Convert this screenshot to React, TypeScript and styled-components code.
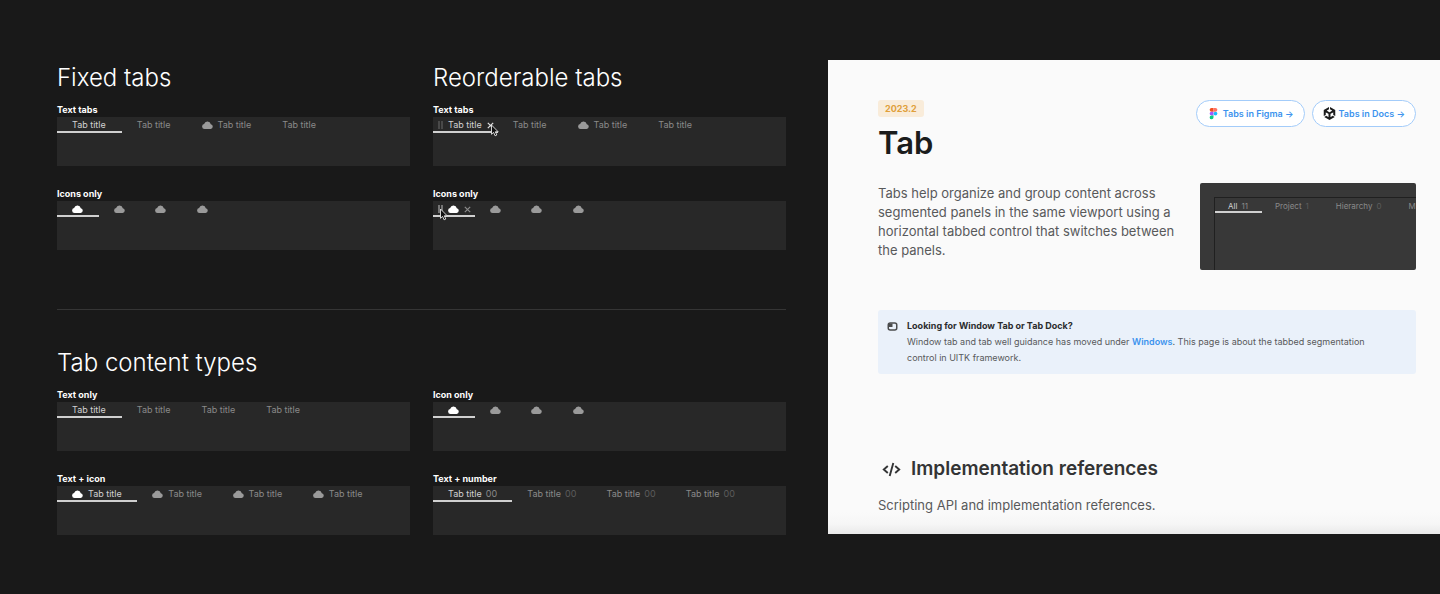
import React from "react";
import styled, { createGlobalStyle, css } from "styled-components";
import { SiUnity } from "react-icons/si";

const GlobalStyle = createGlobalStyle`
  *, *::before, *::after { box-sizing: border-box; }
  body {
    margin: 0;
    background: #191919;
    font-family: Inter, "Liberation Sans", sans-serif;
    -webkit-font-smoothing: antialiased;
  }
  h1, h2, h3, p { margin: 0; }
  button { font: inherit; }
`;

const Page = styled.div`
  display: grid;
  grid-template-columns: minmax(0, 729fr) minmax(0, 612fr);
  column-gap: 42px;
  align-items: start;
  padding: 60px 0 59px 57px;
`;

/* ---------- Specimens ---------- */

const Columns = styled.div`
  display: grid;
  grid-template-columns: repeat(2, minmax(0, 1fr));
  column-gap: 23px;
`;

const Group = styled.section`
  min-width: 0;
`;

const GroupTitle = styled.h2`
  margin-bottom: 8px;
  font-size: 24px;
  font-weight: 300;
  line-height: 35px;
  color: #fff;
  white-space: nowrap;
`;

const Specimen = styled.div`
  & + & { margin-top: 21px; }
`;

const SpecimenLabel = styled.h3`
  font-size: 9px;
  font-weight: 700;
  line-height: 14px;
  color: #fff;
`;

const Panel = styled.div`
  height: 49px;
  background: #282828;
`;

const Divider = styled.hr`
  height: 1px;
  margin: 59px 0 35px;
  border: 0;
  background: #353535;
`;

const TabList = styled.div<{ $width: number }>`
  display: flex;
  width: ${(p) => p.$width}px;
`;

const TabButton = styled.button<{ $active?: boolean; $even?: boolean }>`
  position: relative;
  display: flex;
  align-items: center;
  gap: 5px;
  height: 16px;
  padding: 0 0 0 15px;
  border: 0;
  border-bottom: 2px solid ${(p) => (p.$active ? "#d0d0d0" : "transparent")};
  background: none;
  color: ${(p) => (p.$active ? "#d2d2d2" : "#8a8a8a")};
  font-size: 9px;
  line-height: 14px;
  white-space: nowrap;
  ${(p) => (p.$even ? css`flex: 1 1 0;` : css`flex: none; padding-right: 16px;`)}
`;

const TabText = styled.span`
  display: flex;
  gap: 4px;
  padding-top: 2px;
`;

const Count = styled.span<{ $active?: boolean }>`
  color: ${(p) => (p.$active ? "#8a8a8a" : "#5c5c5c")};
`;

const CloudSvg = styled.svg<{ $active?: boolean }>`
  flex: none;
  width: 11px;
  height: 8px;
  margin-top: 2px;
  fill: ${(p) => (p.$active ? "#fff" : "#9a9a9a")};
`;

const Handle = styled.svg`
  position: absolute;
  left: 5px;
  top: 4px;
  width: 5px;
  height: 8px;
`;

const Close = styled.svg`
  position: absolute;
  right: 4px;
  top: 5px;
  width: 7px;
  height: 7px;
`;

const PointerSvg = styled.svg<{ $over: "close" | "handle" }>`
  position: absolute;
  top: 7px;
  ${(p) => (p.$over === "close" ? css`right: -1px;` : css`left: 6px;`)}
  width: 9px;
  height: 13px;
`;

const Cloud = ({ active }: { active?: boolean }) => (
  <CloudSvg $active={active} viewBox="0 0 22 16" aria-hidden="true">
    <path d="M5 16a5 5 0 0 1-.8-9.9A6.900 6.900 0 0 1 17.600 6.600 4.750 4.750 0 0 1 17.200 16Z" />
  </CloudSvg>
);

const Pointer = ({ over }: { over: "close" | "handle" }) => (
  <PointerSvg $over={over} viewBox="0 0 9 13" aria-hidden="true">
    <path
      d="M1.500 1v9.300l2.100-1.900 1.500 3.400 1.700-.8-1.500-3.200h2.900Z"
      fill="#111"
      stroke="#e6e6e6"
      strokeWidth="0.900"
    />
  </PointerSvg>
);

type TabItem = { icon?: boolean; text?: string; count?: string };

type SpecimenProps = {
  label: string;
  tabs: TabItem[];
  width: number;
  even?: boolean;
  hover?: "close" | "handle";
};

const TabSpecimen = ({ label, tabs, width, even, hover }: SpecimenProps) => (
  <Specimen>
    <SpecimenLabel>{label}</SpecimenLabel>
    <Panel>
      <TabList role="tablist" aria-label={label} $width={width}>
        {tabs.map((tab, i) => {
          const active = i === 0;
          return (
            <TabButton
              key={i}
              type="button"
              role="tab"
              aria-selected={active}
              aria-label={tab.text ? undefined : `Cloud ${i + 1}`}
              $active={active}
              $even={even}
            >
              {tab.icon && <Cloud active={active} />}
              {tab.text && (
                <TabText>
                  {tab.text}
                  {tab.count && <Count $active={active}>{tab.count}</Count>}
                </TabText>
              )}
              {active && hover && (
                <>
                  <Handle viewBox="0 0 5 8" aria-hidden="true">
                    <path
                      d="M1 0v8M4 0v8"
                      stroke={hover === "handle" ? "#c4c4c4" : "#6a6a6a"}
                    />
                  </Handle>
                  <Close viewBox="0 0 7 7" aria-hidden="true">
                    <path
                      d="M.8.8l5.400 5.400M6.200.8L.8 6.200"
                      stroke={hover === "close" ? "#e0e0e0" : "#8a8a8a"}
                      strokeWidth="1.200"
                    />
                  </Close>
                  <Pointer over={hover} />
                </>
              )}
            </TabButton>
          );
        })}
      </TabList>
    </Panel>
  </Specimen>
);

const title: TabItem = { text: "Tab title" };
const titleIcon: TabItem = { text: "Tab title", icon: true };
const icon: TabItem = { icon: true };
const titleCount: TabItem = { text: "Tab title", count: "00" };

const mixedTabs = [title, title, titleIcon, title];
const iconTabs = [icon, icon, icon, icon];
const textTabs = [title, title, title, title];
const textIconTabs = [titleIcon, titleIcon, titleIcon, titleIcon];
const countTabs = [titleCount, titleCount, titleCount, titleCount];

/* ---------- Documentation page ---------- */

const Doc = styled.main`
  min-width: 0;
  overflow: hidden;
  padding: 40px 24px 19px 50px;
  background: linear-gradient(to top, #e9e9e9, #f6f6f6 10px, #fafafa 22px);
`;

const DocHeader = styled.header`
  display: flex;
  justify-content: space-between;
  align-items: flex-start;
`;

const Version = styled.span`
  display: block;
  width: fit-content;
  padding: 0 7px;
  border-radius: 3px;
  background: #f9ecda;
  color: #e0a03a;
  font-size: 9px;
  font-weight: 700;
  line-height: 17px;
`;

const DocTitle = styled.h1`
  margin-top: 6px;
  font-size: 31px;
  font-weight: 600;
  line-height: 40px;
  color: #1b1c1c;
`;

const Links = styled.nav`
  display: flex;
  gap: 7px;
`;

const PillLink = styled.a`
  display: flex;
  align-items: center;
  gap: 3px;
  height: 27px;
  padding: 0 10px;
  border: 1px solid #a3ccfa;
  border-radius: 14px;
  background: #fff;
  color: #3c93ee;
  font-size: 9px;
  font-weight: 600;
  text-decoration: none;
  white-space: nowrap;
`;

const LogoSvg = styled.svg`
  width: 13px;
  height: 13px;
`;

const UnityLogo = styled(SiUnity)`
  width: 13px;
  height: 13px;
  color: #1c1c1c;
`;

const Intro = styled.div`
  display: grid;
  grid-template-columns: minmax(0, 1fr) 216px;
  column-gap: 20px;
  align-items: start;
  margin-top: 20px;
`;

const BodyText = styled.p`
  padding-top: 1px;
  font-size: 13px;
  line-height: 19px;
  color: #58595a;
`;

const Preview = styled.div`
  height: 87px;
  padding: 14px 0 0 14px;
  overflow: hidden;
  border-radius: 2px;
  background: #383838;
`;

const PreviewTabs = styled.div`
  display: flex;
  height: 100%;
  align-items: flex-start;
  border-top: 1px solid #202020;
  border-left: 1px solid #202020;
`;

const PreviewTab = styled(TabButton)`
  height: 15px;
  padding: 0 14px 0 13px;
  font-size: 8px;
`;

const Callout = styled.aside`
  display: grid;
  grid-template-columns: 11px minmax(0, 1fr);
  column-gap: 9px;
  margin-top: 40px;
  padding: 8px 24px 8px 9px;
  border-radius: 3px;
  background: #eaf1fa;
  font-size: 9px;
  line-height: 16px;
  color: #58595a;
`;

const CalloutIcon = styled.svg`
  width: 11px;
  height: 9px;
  margin-top: 4px;
`;

const CalloutTitle = styled.p`
  font-weight: 700;
  color: #2b2c2d;
`;

const InlineLink = styled.a`
  color: #3c93ee;
  font-weight: 600;
  text-decoration: none;
`;

const RefHeading = styled.h2`
  display: flex;
  align-items: center;
  gap: 10px;
  margin: 81px 0 12px;
  padding-left: 4px;
  font-size: 19px;
  font-weight: 600;
  line-height: 28px;
  color: #333435;
`;

const CodeSvg = styled.svg`
  width: 19px;
  height: 15px;
`;

const FigmaLogo = () => (
  <LogoSvg viewBox="0 0 26 26" aria-hidden="true">
    <path d="M9 2h4v7.400H9a3.700 3.700 0 0 1 0-7.400Z" fill="#f24e1e" />
    <path d="M13 2h4a3.700 3.700 0 0 1 0 7.400h-4Z" fill="#ff7262" />
    <path d="M9 9.400h4v7.400H9a3.700 3.700 0 0 1 0-7.400Z" fill="#a259ff" />
    <circle cx="17" cy="13.100" r="3.700" fill="#1abcfe" />
    <path d="M9 16.800h4v3.700a3.850 3.850 0 1 1-4-3.700Z" fill="#0acf83" />
  </LogoSvg>
);

export default function App() {
  return (
    <>
      <GlobalStyle />
      <Page>
        <div>
          <Columns>
            <Group>
              <GroupTitle>Fixed tabs</GroupTitle>
              <TabSpecimen label="Text tabs" tabs={mixedTabs} width={275} />
              <TabSpecimen label="Icons only" tabs={iconTabs} width={166} even />
            </Group>
            <Group>
              <GroupTitle>Reorderable tabs</GroupTitle>
              <TabSpecimen label="Text tabs" tabs={mixedTabs} width={275} hover="close" />
              <TabSpecimen label="Icons only" tabs={iconTabs} width={166} even hover="handle" />
            </Group>
          </Columns>
          <Divider />
          <GroupTitle>Tab content types</GroupTitle>
          <Columns>
            <Group>
              <TabSpecimen label="Text only" tabs={textTabs} width={259} even />
              <TabSpecimen label="Text + icon" tabs={textIconTabs} width={321} even />
            </Group>
            <Group>
              <TabSpecimen label="Icon only" tabs={iconTabs} width={166} even />
              <TabSpecimen label="Text + number" tabs={countTabs} width={317} even />
            </Group>
          </Columns>
        </div>

        <Doc>
          <DocHeader>
            <div>
              <Version>2023.2</Version>
              <DocTitle>Tab</DocTitle>
            </div>
            <Links aria-label="Resources">
              <PillLink href="#figma">
                <FigmaLogo />
                Tabs in Figma →
              </PillLink>
              <PillLink href="#docs">
                <UnityLogo aria-hidden="true" />
                Tabs in Docs →
              </PillLink>
            </Links>
          </DocHeader>

          <Intro>
            <BodyText>
              Tabs help organize and group content across segmented panels in the same viewport
              using a horizontal tabbed control that switches between the panels.
            </BodyText>
            <Preview>
              <PreviewTabs role="tablist" aria-label="Search scope">
                <PreviewTab type="button" role="tab" aria-selected $active>
                  <TabText>All <Count $active>11</Count></TabText>
                </PreviewTab>
                <PreviewTab type="button" role="tab" aria-selected={false}>
                  <TabText>Project <Count>1</Count></TabText>
                </PreviewTab>
                <PreviewTab type="button" role="tab" aria-selected={false}>
                  <TabText>Hierarchy <Count>0</Count></TabText>
                </PreviewTab>
                <PreviewTab type="button" role="tab" aria-selected={false}>
                  <TabText>M</TabText>
                </PreviewTab>
              </PreviewTabs>
            </Preview>
          </Intro>

          <Callout>
            <CalloutIcon viewBox="0 0 22 18" aria-hidden="true">
              <rect x="2.500" y="2" width="17" height="14" rx="4" fill="none" stroke="#4b4c4d" strokeWidth="3" />
              <path d="M3 3h8v7H3Z" fill="#4b4c4d" />
            </CalloutIcon>
            <div>
              <CalloutTitle>Looking for Window Tab or Tab Dock?</CalloutTitle>
              <p>
                Window tab and tab well guidance has moved under{" "}
                <InlineLink href="#windows">Windows</InlineLink>. This page is about the tabbed
                segmentation control in UITK framework.
              </p>
            </div>
          </Callout>

          <RefHeading>
            <CodeSvg viewBox="0 0 19 15" fill="none" stroke="#333435" strokeWidth="1.900" aria-hidden="true">
              <path d="M5.800 4L1.800 7.500l4 3.500M13.200 4l4 3.500-4 3.500M11.300 1L7.700 14" />
            </CodeSvg>
            Implementation references
          </RefHeading>
          <BodyText>Scripting API and implementation references.</BodyText>
        </Doc>
      </Page>
    </>
  );
}
